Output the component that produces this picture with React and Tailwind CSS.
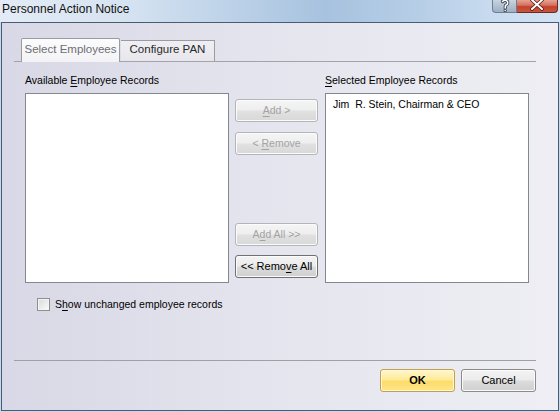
import React from "react";

function Btn({ children, disabled, className = "" }) {
  const base =
    "h-[23px] w-[83px] flex items-center justify-center rounded-[3px] border text-[10.5px] leading-none";
  const normal =
    "border-[#707070] bg-[linear-gradient(180deg,#f3f3f3_0%,#ebebeb_48%,#dcdcdc_52%,#cfcfcf_100%)] shadow-[inset_0_0_0_1px_#fbfbfb] text-black";
  const dis =
    "border-[#b3b6b9] bg-[linear-gradient(180deg,#f5f5f5_0%,#eeeeee_48%,#e1e1e1_52%,#d8d8d8_100%)] shadow-[inset_0_0_0_1px_#fbfbfb] text-[#a3a3a3]";
  return <div className={`${base} ${disabled ? dis : normal} ${className}`}>{children}</div>;
}

export default function App() {
  return (
    <div className="w-[560px] h-[412px] flex flex-col overflow-hidden bg-[#c4d8ee] font-['Liberation_Sans',Arial,sans-serif] text-[10.5px] text-black select-none">
      {/* Title bar */}
      <div className="relative h-[22px] shrink-0 flex items-center pl-[2px] pb-[4px] bg-[linear-gradient(90deg,#e3ecf6_0%,#d6e3f1_22%,#bcd1e8_42%,#a7c2df_58%,#b7cee7_75%,#c8dbef_88%,#d3e3f3_100%)]">
        <span className="text-[12px] text-[#111]">Personnel Action Notice</span>
        <div className="absolute right-[2px] top-0 flex">
          <div className="w-[25px] h-[13px] rounded-bl-[4px] border border-t-0 border-[#6f7f92] bg-[linear-gradient(180deg,#c9d4e0_0%,#b3c1d1_50%,#9fb0c3_100%)] flex items-start justify-center">
            <svg width="10" height="12" viewBox="0 0 10 12">
              <path d="M2.5 1.5 Q5 -1 7.5 1.5 Q8.5 4 5.5 5.5 L5.2 8" fill="none" stroke="#3a4656" strokeWidth="3.2" strokeLinecap="round" />
              <circle cx="5.2" cy="10.5" r="1.6" fill="#3a4656" />
              <path d="M2.5 1.5 Q5 -1 7.5 1.5 Q8.5 4 5.5 5.5 L5.2 8" fill="none" stroke="#ffffff" strokeWidth="1.5" strokeLinecap="round" />
              <circle cx="5.2" cy="10.5" r="0.8" fill="#ffffff" />
            </svg>
          </div>
          <div className="w-[41px] h-[13px] rounded-br-[4px] border border-t-0 border-l-0 border-[#6a2a22] bg-[linear-gradient(180deg,#e6a394_0%,#d46e5b_45%,#c2432e_55%,#c9553d_100%)] flex items-start justify-center">
            <svg width="14" height="11" viewBox="0 0 14 11">
              <path d="M2 0 L12 9 M12 0 L2 9" stroke="#5a1a12" strokeWidth="3.6" strokeLinecap="round" />
              <path d="M2 0 L12 9 M12 0 L2 9" stroke="#ffffff" strokeWidth="2" strokeLinecap="round" />
            </svg>
          </div>
        </div>
      </div>

      {/* Body */}
      <div className="flex-1 mx-[1px] mb-[1px] border border-[#485c73] bg-[linear-gradient(90deg,#d8d8e6_0%,#e4e4ee_45%,#eeeef4_100%)] flex flex-col">
        <div className="ml-[12px] w-[522px] flex-1 flex flex-col pt-[14px] pb-[18px]">
          {/* Tabs */}
          <div className="h-[25px] flex items-end border-b border-[#a3a3a8] pl-[7px]">
            <div className="h-[24px] w-[99px] -mb-px rounded-t-[2px] border border-b-0 border-[#9a9aa2] bg-[linear-gradient(180deg,#fcfcfd_0%,#f3f3f6_100%)] flex items-center justify-center pb-[1px] text-[#6e6e72] text-[11.5px]">
              Select Employees
            </div>
            <div className="h-[21px] w-[94px] ml-[1px] border border-b-0 border-l-0 border-[#9a9aa2] bg-[linear-gradient(180deg,#efeff3_0%,#e6e6ec_100%)] flex items-center justify-center pb-[2px] text-[#2a2a2a] text-[11.5px]">
              Configure PAN
            </div>
          </div>

          {/* Lists */}
          <div className="flex pl-[11px]">
            <div className="w-[204px] flex flex-col">
              <div className="pt-[12px] h-[25px] leading-[13px]">
                Available <u className="underline-offset-[2px]">E</u>mployee Records
              </div>
              <div className="mt-[6px] h-[190px] border border-[#828790] bg-white"></div>
            </div>

            <div className="ml-[6px] flex flex-col pt-[37px]">
              <Btn disabled>
                <span><u className="underline-offset-[2px]">A</u>dd &gt;</span>
              </Btn>
              <Btn disabled className="mt-[10px]">
                <span>&lt; <u className="underline-offset-[2px]">R</u>emove</span>
              </Btn>
              <Btn disabled className="mt-[68px]">
                <span>A<u className="underline-offset-[2px]">d</u>d All &gt;&gt;</span>
              </Btn>
              <Btn className="mt-[9px] !text-[11px]">
                <span>&lt;&lt; Remo<u className="underline-offset-[2px]">v</u>e All</span>
              </Btn>
            </div>

            <div className="ml-[7px] w-[204px] flex flex-col">
              <div className="pt-[12px] h-[25px] leading-[13px]">
                <u className="underline-offset-[2px]">S</u>elected Employee Records
              </div>
              <div className="mt-[6px] h-[190px] border border-[#828790] bg-white pl-[7px] pt-[4px] leading-[13px] whitespace-pre">
                {"Jim  R. Stein, Chairman & CEO"}
              </div>
            </div>
          </div>

          {/* Checkbox */}
          <div className="mt-[15px] ml-[23px] flex items-center">
            <div className="w-[13px] h-[13px] border border-[#8e8f8f] bg-[linear-gradient(135deg,#d9d9dc_0%,#eeeef0_60%,#fbfbfb_100%)] shadow-[inset_0_0_0_1px_#f4f4f4]"></div>
            <span className="ml-[5px] leading-[13px]">
              S<u className="underline-offset-[2px]">h</u>ow unchanged employee records
            </span>
          </div>

          {/* Bottom */}
          <div className="mt-auto">
            <div className="h-px bg-[#a0a0a4]"></div>
            <div className="mt-[8px] flex justify-end gap-[6px]">
              <div className="h-[23px] w-[75px] rounded-[3px] border border-[#c5a04a] bg-[linear-gradient(180deg,#fff6cf_0%,#ffeb99_45%,#fcdc6a_55%,#fde58a_100%)] shadow-[inset_0_0_0_1px_#fff8dd] flex items-center justify-center font-bold text-[11px] text-black">
                OK
              </div>
              <div className="h-[23px] w-[75px] rounded-[3px] border border-[#8a8a8a] bg-[linear-gradient(180deg,#f3f3f3_0%,#ebebeb_48%,#dcdcdc_52%,#cfcfcf_100%)] shadow-[inset_0_0_0_1px_#fbfbfb] flex items-center justify-center text-[11px] text-black">
                Cancel
              </div>
            </div>
          </div>
        </div>
      </div>
    </div>
  );
}
